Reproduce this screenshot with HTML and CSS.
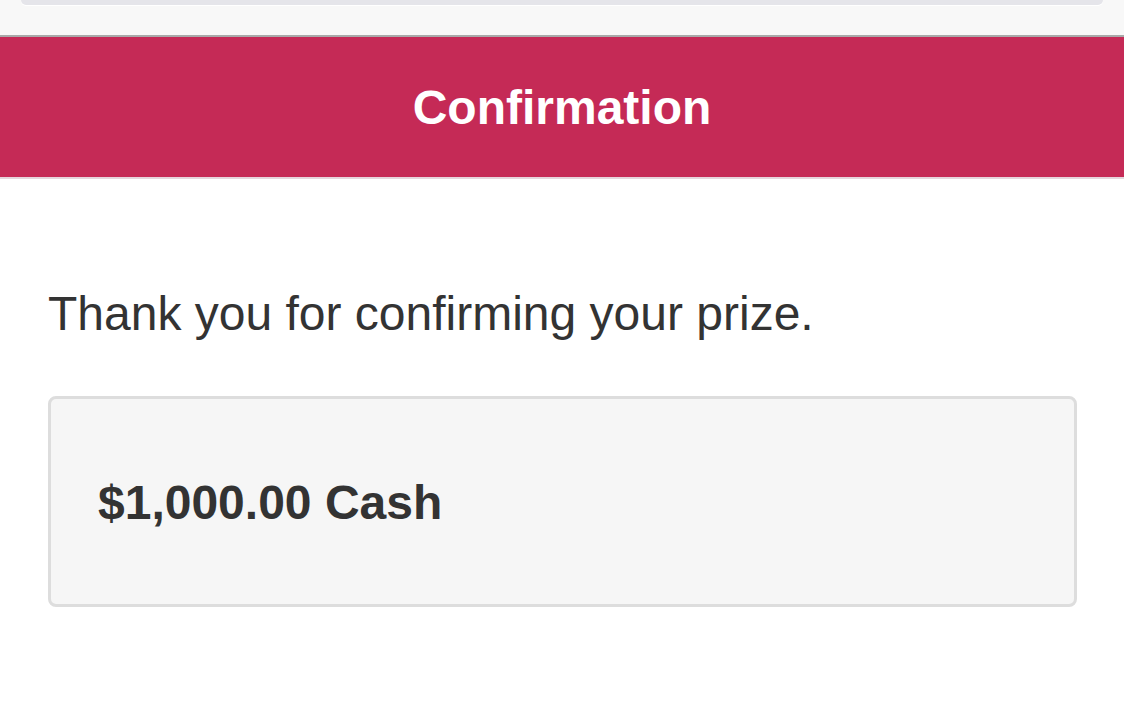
FILE: index.html
```html
<!DOCTYPE html>
<html lang="en">
<head>
<meta charset="utf-8">
<title>Confirmation</title>
<link rel="stylesheet" href="styles.css">
</head>
<body>
  <div class="topbar">
    <div class="pill"></div>
  </div>
  <header class="banner">
    <h1 class="banner-title">Confirmation</h1>
  </header>
  <main class="content">
    <p class="message">Thank you for confirming your prize.</p>
    <div class="prize-box">
      <span class="prize">$1,000.00 Cash</span>
    </div>
  </main>
</body>
</html>
```
FILE: styles.css
```css
* { box-sizing: border-box; }
html, body { margin: 0; padding: 0; background: #ffffff; }
body {
  font-family: "Liberation Sans", Arial, Helvetica, sans-serif;
  color: #333333;
  width: 1124px;
  height: 702px;
  overflow: hidden;
}
.topbar {
  height: 37px;
  background: #f8f8f8;
  padding: 0 21px;
  border-bottom: 2px solid #a9a9a9;
}
.pill {
  height: 5px;
  background: #e5e5ea;
  border-radius: 0 0 18px 18px;
  box-shadow: 0 1px 0 #ffffff;
}
.banner {
  height: 142px;
  background: #c52a56;
  border-bottom: 2px solid #e6d6dc;
  display: flex;
  align-items: center;
  justify-content: center;
}
.banner-title {
  margin: 0;
  color: #ffffff;
  font-size: 48px;
  font-weight: bold;
  line-height: 56px;
  padding-top: 2px;
}
.content {
  padding: 107px 47px 0 48px;
}
.message {
  margin: 0;
  font-size: 48px;
  line-height: 56px;
  color: #333333;
}
.prize-box {
  margin-top: 54px;
  height: 211px;
  background: #f6f6f6;
  border: 3px solid #dddddd;
  border-radius: 8px;
  padding: 76px 46px 0 47px;
}
.prize {
  display: block;
  font-size: 48px;
  font-weight: bold;
  line-height: 56px;
  color: #333333;
}
```
